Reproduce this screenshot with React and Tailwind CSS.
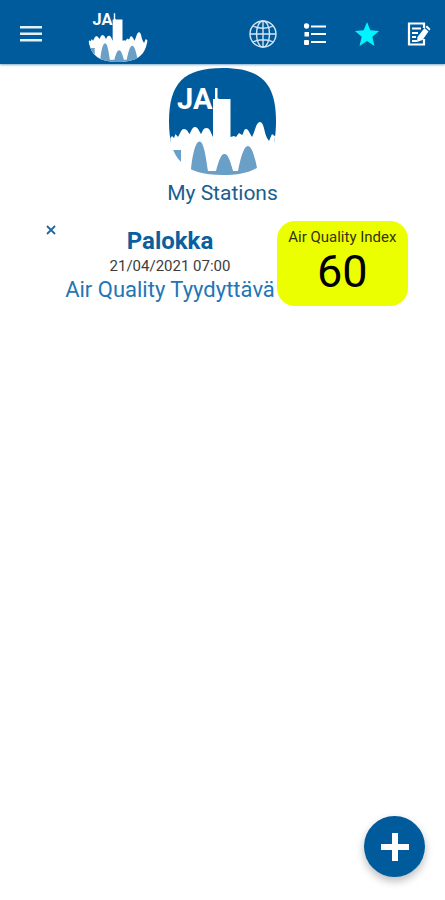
import React, { useState } from 'react';

const Logo = ({ id, className }) => (
  <svg viewBox="0 0 107 107" className={className} role="img" aria-label="JA">
    <defs>
      <clipPath id={id}>
        <path d="M53.5 0C92 0 107 15 107 53.5S92 107 53.5 107 0 92 0 53.5 15 0 53.5 0Z" />
      </clipPath>
    </defs>
    <g clipPath={`url(#${id})`}>
      <rect width="107" height="74" fill="#005b9c" />
      {/* skyline */}
      <path
        fill="#fff"
        d="M0 72L3 68L5 70L6.500 66L9 69C11 66 12 61 15 61S19 64 20.500 66C22 64 23 59 26 59S30 63 32 66C34 63 34 60 37.500 60S42 65 44 69V31H46V20H48.500V30L50 31H61.500V69L65 68L67 69L70 65L73 67C74.500 66 74.500 61 77 61S81 66 83 69C86 64 87 54 91 54S95 64 98 70L100 73L103 66L107 69V107H0Z"
      />
      {/* lower waves */}
      <path
        fill="#6a9fc7"
        d="M4 82H12V94L4 86ZM21 107L22 102C23 90 26 73.500 30.500 73.500S37 90 39 103H47C50 92 52 86 55.500 86S61 92 64 103H69C72 88 75 78 79 78S86 90 88 100L90 107H21Z"
      />
      <text x="8" y="41" fill="#fff" className="font-[Roboto,sans-serif] text-[29px] font-bold">
        JA
      </text>
    </g>
  </svg>
);

const MenuIcon = () => (
  <svg viewBox="0 0 22 16" className="h-4 w-[22px]" fill="#e4f0f8">
    <path d="M0 0H22V2.500H0ZM0 6.500H22V9H0ZM0 13H22V15.500H0Z" />
  </svg>
);

const GlobeIcon = () => (
  <svg viewBox="0 0 28 28" className="size-7" fill="none" stroke="#d3e5f2" strokeWidth="1.400">
    <circle cx="14" cy="14" r="13" />
    <ellipse cx="14" cy="14" rx="6.500" ry="13" />
    <path d="M14 1V27M1 14H27M4 6C9 9 19 9 24 6M4 22C9 19 19 19 24 22" />
  </svg>
);

const ListIcon = () => (
  <svg viewBox="0 0 22 22" className="size-[22px]" fill="#fff">
    <circle cx="2.500" cy="3" r="2.700" />
    <rect x="0.500" y="9" width="4.500" height="4.500" />
    <rect x="0" y="17" width="5" height="5" rx="1" />
    <path d="M7 2.500H22V4.500H7ZM7 10H22V12H7ZM7 18H22V20H7Z" />
  </svg>
);

const StarIcon = () => (
  <svg viewBox="0 0 24 24" className="size-6" fill="#00f6ff">
    <path d="M12 0L15.300 8.300L24 9L17.300 14.700L19.500 24L12 19L4.500 24L6.700 14.700L0 9L8.700 8.300Z" />
  </svg>
);

const NoteIcon = () => (
  <svg viewBox="0 0 24 24" className="size-6" fill="none">
    <path d="M17 6V1.500H2V22.500H17V17" stroke="#fff" strokeWidth="2.200" />
    <path d="M5 6.500H14M5 11H11M5 15H9M5 19H10" stroke="#fff" strokeWidth="1.800" />
    <path d="M10.500 15L17.500 6L21.500 9.500L15.500 18L10 20Z" fill="#fff" />
    <path d="M18.500 5L20 3.500L23.500 7L22.300 8.500Z" fill="#fff" />
  </svg>
);

const navItems = [
  { name: 'Map', icon: <GlobeIcon /> },
  { name: 'List', icon: <ListIcon /> },
  { name: 'My Stations', icon: <StarIcon /> },
  { name: 'Notes', icon: <NoteIcon /> },
];

const App = () => {
  const [stations, setStations] = useState([
    { name: 'Palokka', time: '21/04/2021 07:00', quality: 'Tyydyttävä', index: 60 },
  ]);

  const removeStation = (name) => {
    setStations((prev) => prev.filter((station) => station.name !== name));
  };

  return (
    <div className="flex min-h-screen flex-col bg-white font-[Roboto,sans-serif]">
      <header className="flex h-16 items-center justify-between bg-[#005b9c] pl-5 pr-3 shadow-[0_1px_2px_#005b9c80]">
        <div className="flex items-center gap-[46px]">
          <button type="button" aria-label="Menu" className="pt-1">
            <MenuIcon />
          </button>
          <Logo id="header-logo" className="size-[60px]" />
        </div>
        <nav className="flex items-center gap-6 pt-1">
          {navItems.map((item) => (
            <button key={item.name} type="button" aria-label={item.name} className="flex h-7 w-7 items-center justify-center">
              {item.icon}
            </button>
          ))}
        </nav>
      </header>

      <main className="flex flex-1 flex-col pt-1">
        <div className="flex flex-col items-center">
          <Logo id="main-logo" className="size-[107px]" />
          <h1 className="mt-1 text-[21px] leading-7 text-[#17608f]">My Stations</h1>
        </div>

        {stations.map((station) => (
          <section key={station.name} className="mt-[14px] flex items-start justify-center pl-2">
            <button
              type="button"
              aria-label={`Remove ${station.name}`}
              onClick={() => removeStation(station.name)}
              className="mt-[3px] flex size-3 items-center justify-center"
            >
              <svg viewBox="0 0 10 10" className="size-[10px]" stroke="#20679f" strokeWidth="1.800">
                <path d="M1 1L9 9M9 1L1 9" />
              </svg>
            </button>
            <div className="ml-2 flex flex-col items-center pt-1">
              <h2 className="text-[24px] font-bold leading-8 text-[#0a5f9e]">{station.name}</h2>
              <p className="text-[15px] leading-[18px] text-[#3c3c3c]">{station.time}</p>
              <p className="text-[22px] leading-[30px] text-[#2375b5]">Air Quality {station.quality}</p>
            </div>
            <div className="ml-[2px] flex h-[85px] w-[131px] flex-col items-center rounded-[18px] bg-[#ecff00] pt-[6px] text-[#33330a]">
              <p className="text-[15px] leading-5">Air Quality Index</p>
              <p className="text-[45px] leading-[50px] text-black">{station.index}</p>
            </div>
          </section>
        ))}
      </main>

      <button
        type="button"
        aria-label="Add station"
        className="fixed bottom-[23px] right-5 flex size-[61px] items-center justify-center rounded-full bg-[#005b9c] shadow-[0_4px_8px_#00000045]"
      >
        <svg viewBox="0 0 28 28" className="size-7" fill="#fff">
          <path d="M11 0H17V11H28V17H17V28H11V17H0V11H11Z" />
        </svg>
      </button>
    </div>
  );
};

export default App;
